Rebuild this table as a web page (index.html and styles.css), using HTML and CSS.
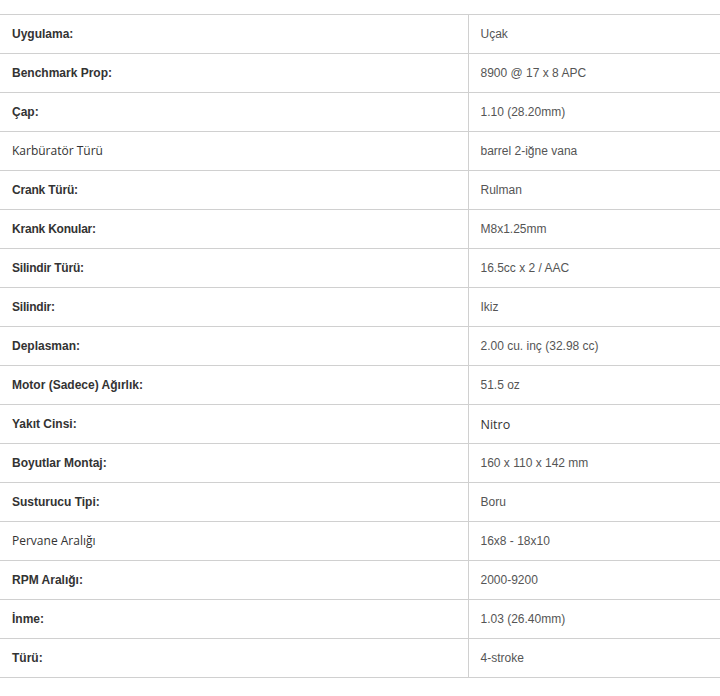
FILE: index.html
```html
<!DOCTYPE html>
<html lang="tr">
<head>
<meta charset="utf-8">
<title>Özellikler</title>
<link rel="stylesheet" href="styles.css">
</head>
<body>
<table class="specs">
  <tbody>
    <tr><td class="label">Uygulama:</td><td class="value">Uçak</td></tr>
    <tr><td class="label">Benchmark Prop:</td><td class="value">8900 @ 17 x 8 APC</td></tr>
    <tr><td class="label">Çap:</td><td class="value">1.10 (28.20mm)</td></tr>
    <tr><td class="label plain">Karbüratör Türü</td><td class="value">barrel 2-iğne vana</td></tr>
    <tr><td class="label alt">Crank Türü:</td><td class="value">Rulman</td></tr>
    <tr><td class="label alt">Krank Konular:</td><td class="value">M8x1.25mm</td></tr>
    <tr><td class="label alt">Silindir Türü:</td><td class="value">16.5cc x 2 / AAC</td></tr>
    <tr><td class="label alt">Silindir:</td><td class="value">Ikiz</td></tr>
    <tr><td class="label">Deplasman:</td><td class="value">2.00 cu. inç (32.98 cc)</td></tr>
    <tr><td class="label">Motor (Sadece) Ağırlık:</td><td class="value">51.5 oz</td></tr>
    <tr><td class="label">Yakıt Cinsi:</td><td class="value plainv">Nitro</td></tr>
    <tr><td class="label">Boyutlar Montaj:</td><td class="value">160 x 110 x 142 mm</td></tr>
    <tr><td class="label">Susturucu Tipi:</td><td class="value">Boru</td></tr>
    <tr><td class="label plain">Pervane Aralığı</td><td class="value">16x8 - 18x10</td></tr>
    <tr><td class="label">RPM Aralığı:</td><td class="value">2000-9200</td></tr>
    <tr><td class="label">İnme:</td><td class="value">1.03 (26.40mm)</td></tr>
    <tr><td class="label">Türü:</td><td class="value">4-stroke</td></tr>
  </tbody>
</table>
</body>
</html>
```

FILE: styles.css
```css
html, body {
  margin: 0;
  padding: 0;
  background: #ffffff;
}

body {
  padding-top: 14px;
  font-family: "Liberation Sans", Arial, sans-serif;
}

.specs {
  width: 720px;
  border-collapse: collapse;
  border-spacing: 0;
}

.specs td {
  height: 39px;
  padding: 0 0 0 12px;
  border-top: 1px solid #d0d0d0;
  border-bottom: 1px solid #d0d0d0;
  vertical-align: middle;
  box-sizing: border-box;
}

.label {
  width: 468px;
  font-size: 12px;
  font-weight: bold;
  color: #333333;
}

.label.alt {
  letter-spacing: -0.2px;
}

.label.plain {
  font-family: "Open Sans", "Liberation Sans", sans-serif;
  font-weight: normal;
  font-size: 12px;
  color: #333333;
  padding-bottom: 2px;
}

.value {
  border-left: 1px solid #d0d0d0;
  font-size: 12px;
  color: #555555;
}

.value.plainv {
  font-family: "Open Sans", "Liberation Sans", sans-serif;
  font-size: 12.5px;
  color: #333333;
}
```
